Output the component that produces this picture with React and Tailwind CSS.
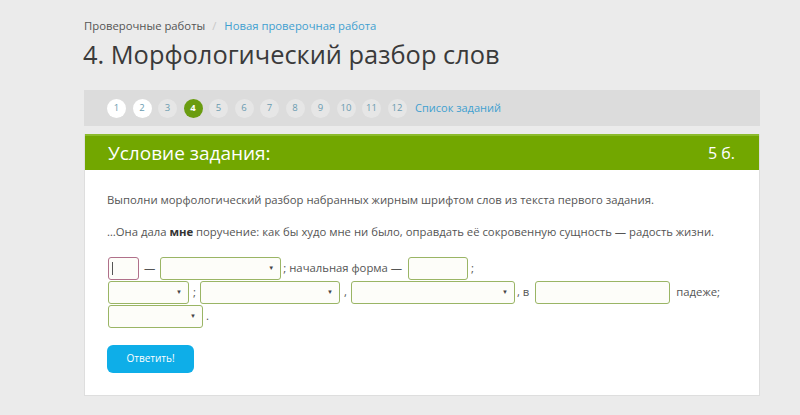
import React from 'react';

const font = { fontFamily: '"Open Sans", "Liberation Sans", sans-serif' };

const pages = [1, 2, 3, 4, 5, 6, 7, 8, 9, 10, 11, 12];

const PageDot = ({ n }) => {
  let cls = 'bg-[#e6e6e6] text-[#6a9bb0]';
  if (n === 1 || n === 2) cls = 'bg-white text-[#6a9bb0]';
  if (n === 4) cls = 'bg-[#6a9c10] text-white font-bold';
  return (
    <span className={`w-[19px] h-[19px] rounded-full flex items-center justify-center text-[9.5px] ${cls}`}>{n}</span>
  );
};

const Select = ({ w }) => (
  <span className={`${w} h-[23px] border border-[#9ab565] rounded-[3px] bg-[#fdfdf9] flex items-center justify-end pr-[6px]`}>
    <span className="text-[6px] text-[#444]">▼</span>
  </span>
);

const Input = ({ w, pink }) => (
  <span className={`${w} h-[23px] rounded-[3px] bg-[#fdfdf9] border flex items-center ${pink ? 'border-[#b0708a]' : 'border-[#9ab565]'}`}>
    {pink && <span className="ml-[3px] w-px h-[13px] bg-[#555]" />}
  </span>
);

export default function App() {
  return (
    <div className="w-[800px] h-[415px] bg-[#ebebeb] overflow-hidden" style={font}>
      <div className="ml-[84px] w-[676px] pt-[17px]">
        {/* Хлебные крошки */}
        <div className="text-[11.3px] flex items-center gap-[7px] h-[18px]">
          <span className="text-[#555]">Проверочные работы</span>
          <span className="text-[#c8c8c8]">/</span>
          <span className="text-[#3fa0d0] ml-[1px]">Новая проверочная работа</span>
        </div>
        <h1 className="text-[25.4px] text-[#3a3a3a] leading-[34px] mt-[2px] ml-[-1px]">4. Морфологический разбор слов</h1>

        {/* Навигация по заданиям */}
        <div className="mt-[19px] h-[36px] bg-[#dcdcdc] flex items-center pl-[23px] gap-[6.5px]">
          {pages.map((n) => <PageDot key={n} n={n} />)}
          <span className="text-[11px] text-[#3fa0d0] ml-[2px]">Список заданий</span>
        </div>

        {/* Карточка задания */}
        <div className="mt-[8px] bg-white border-x border-b border-[#dedede]">
          <div className="h-[36px] bg-[#72a700] border-t-2 border-[#8cbb2c] flex items-center justify-between px-[23px] text-white">
            <span className="text-[19px]">Условие задания:</span>
            <span className="text-[16px] mr-[1px]">5 б.</span>
          </div>
          <div className="px-[22px] pt-[22px] pb-[22px] text-[11.3px] text-[#555]">
            <p>Выполни морфологический разбор набранных жирным шрифтом слов из текста первого задания.</p>
            <p className="mt-[15px]">…Она дала <b className="text-[#333]">мне</b> поручение: как бы худо мне ни было, оправдать её сокровенную сущность — радость жизни.</p>

            <div className="mt-[16px] flex flex-col gap-[1px] ml-[1px]">
              <div className="flex items-center">
                <Input w="w-[31px]" pink />
                <span className="mx-[5px]">—</span>
                <Select w="w-[121px]" />
                <span className="ml-[2px] mr-[6px]">; начальная форма —</span>
                <Input w="w-[60px]" />
                <span className="ml-[3px]">;</span>
              </div>
              <div className="flex items-center">
                <Select w="w-[81px]" />
                <span className="mx-[4px]">;</span>
                <Select w="w-[140px]" />
                <span className="mx-[4px]">,</span>
                <Select w="w-[164px]" />
                <span className="ml-[2px] mr-[6px]">, в</span>
                <Input w="w-[135px]" />
                <span className="ml-[6px]">падеже;</span>
              </div>
              <div className="flex items-center">
                <Select w="w-[95px]" />
                <span className="ml-[3px]">.</span>
              </div>
            </div>

            <button className="mt-[17px] w-[87px] h-[28px] rounded-[6px] bg-[#0eaee8] text-white text-[10px]">Ответить!</button>
          </div>
        </div>
      </div>
    </div>
  );
}
